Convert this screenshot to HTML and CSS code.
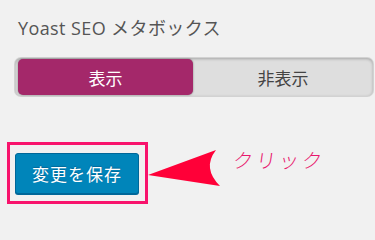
FILE: index.html
```html
<!DOCTYPE html>
<html lang="ja">
<head>
<meta charset="utf-8">
<link rel="stylesheet" href="styles.css">
</head>
<body>
<div class="page">
  <div class="title">Yoast SEO メタボックス</div>
  <div class="toggle">
    <div class="opt opt-on">表示</div>
    <div class="opt opt-off">非表示</div>
  </div>
  <div class="row">
    <div class="highlight">
      <button class="save">変更を保存</button>
    </div>
    <svg class="arrow" width="74" height="40" viewBox="0 0 74 40">
      <path d="M0 26 L68 1 Q54 19 72 37 Z" fill="#ff0038"/>
    </svg>
    <div class="note">クリック</div>
  </div>
</div>
</body>
</html>
```
FILE: styles.css
```css
html, body {
  margin: 0;
  padding: 0;
  background: #f1f1f1;
  width: 375px;
  height: 215px;
  overflow: hidden;
}
.page {
  font-family: "Open Sans", "Noto Sans CJK JP", sans-serif;
  padding-top: 16px;
}
.title {
  margin-left: 18px;
  font-size: 18px;
  line-height: 24px;
  color: #555;
  letter-spacing: 0.4px;
}
.toggle {
  margin: 18px 0 0 15px;
  width: 358px;
  height: 38px;
  box-sizing: border-box;
  display: flex;
  padding: 1px 0 1px 3px;
  background: #dedede;
  border-radius: 6px;
  box-shadow: inset 0 1px 3px rgba(0,0,0,0.25), 0 0 0 1px #d2d2d2;
}
.opt {
  display: flex;
  align-items: center;
  justify-content: center;
  font-family: "Noto Sans CJK JP", sans-serif;
  font-size: 17px;
}
.opt-on {
  width: 175px;
  background: #a4286a;
  color: #fff;
  border-radius: 5px;
  box-shadow: 0 0 2px rgba(0,0,0,0.45);
}
.opt-off {
  flex: 1;
  color: #444;
}
.row {
  display: flex;
  align-items: flex-start;
  margin-top: 46px;
  margin-left: 7px;
}
.highlight {
  width: 141px;
  height: 62px;
  box-sizing: border-box;
  border: 3px solid #f8136c;
  padding: 8px 0 0 5px;
}
.save {
  display: block;
  width: 124px;
  height: 41px;
  margin: 0;
  padding: 0;
  background: #0085ba;
  border: 1px solid #006799;
  border-radius: 3px;
  box-shadow: 0 1px 0 #006799;
  color: #fff;
  font-family: "Noto Sans CJK JP", sans-serif;
  font-size: 17px;
  text-shadow: 0 -1px 1px #006799;
  letter-spacing: 1px;
}
.arrow {
  display: block;
  margin-top: 7px;
  flex: none;
}
.note {
  margin: 5px 0 0 11px;
  font-family: "Noto Sans CJK JP", sans-serif;
  font-weight: 300;
  font-size: 20px;
  line-height: 26px;
  letter-spacing: 3px;
  color: #e8186d;
  transform: skewX(-8deg);
}
```
